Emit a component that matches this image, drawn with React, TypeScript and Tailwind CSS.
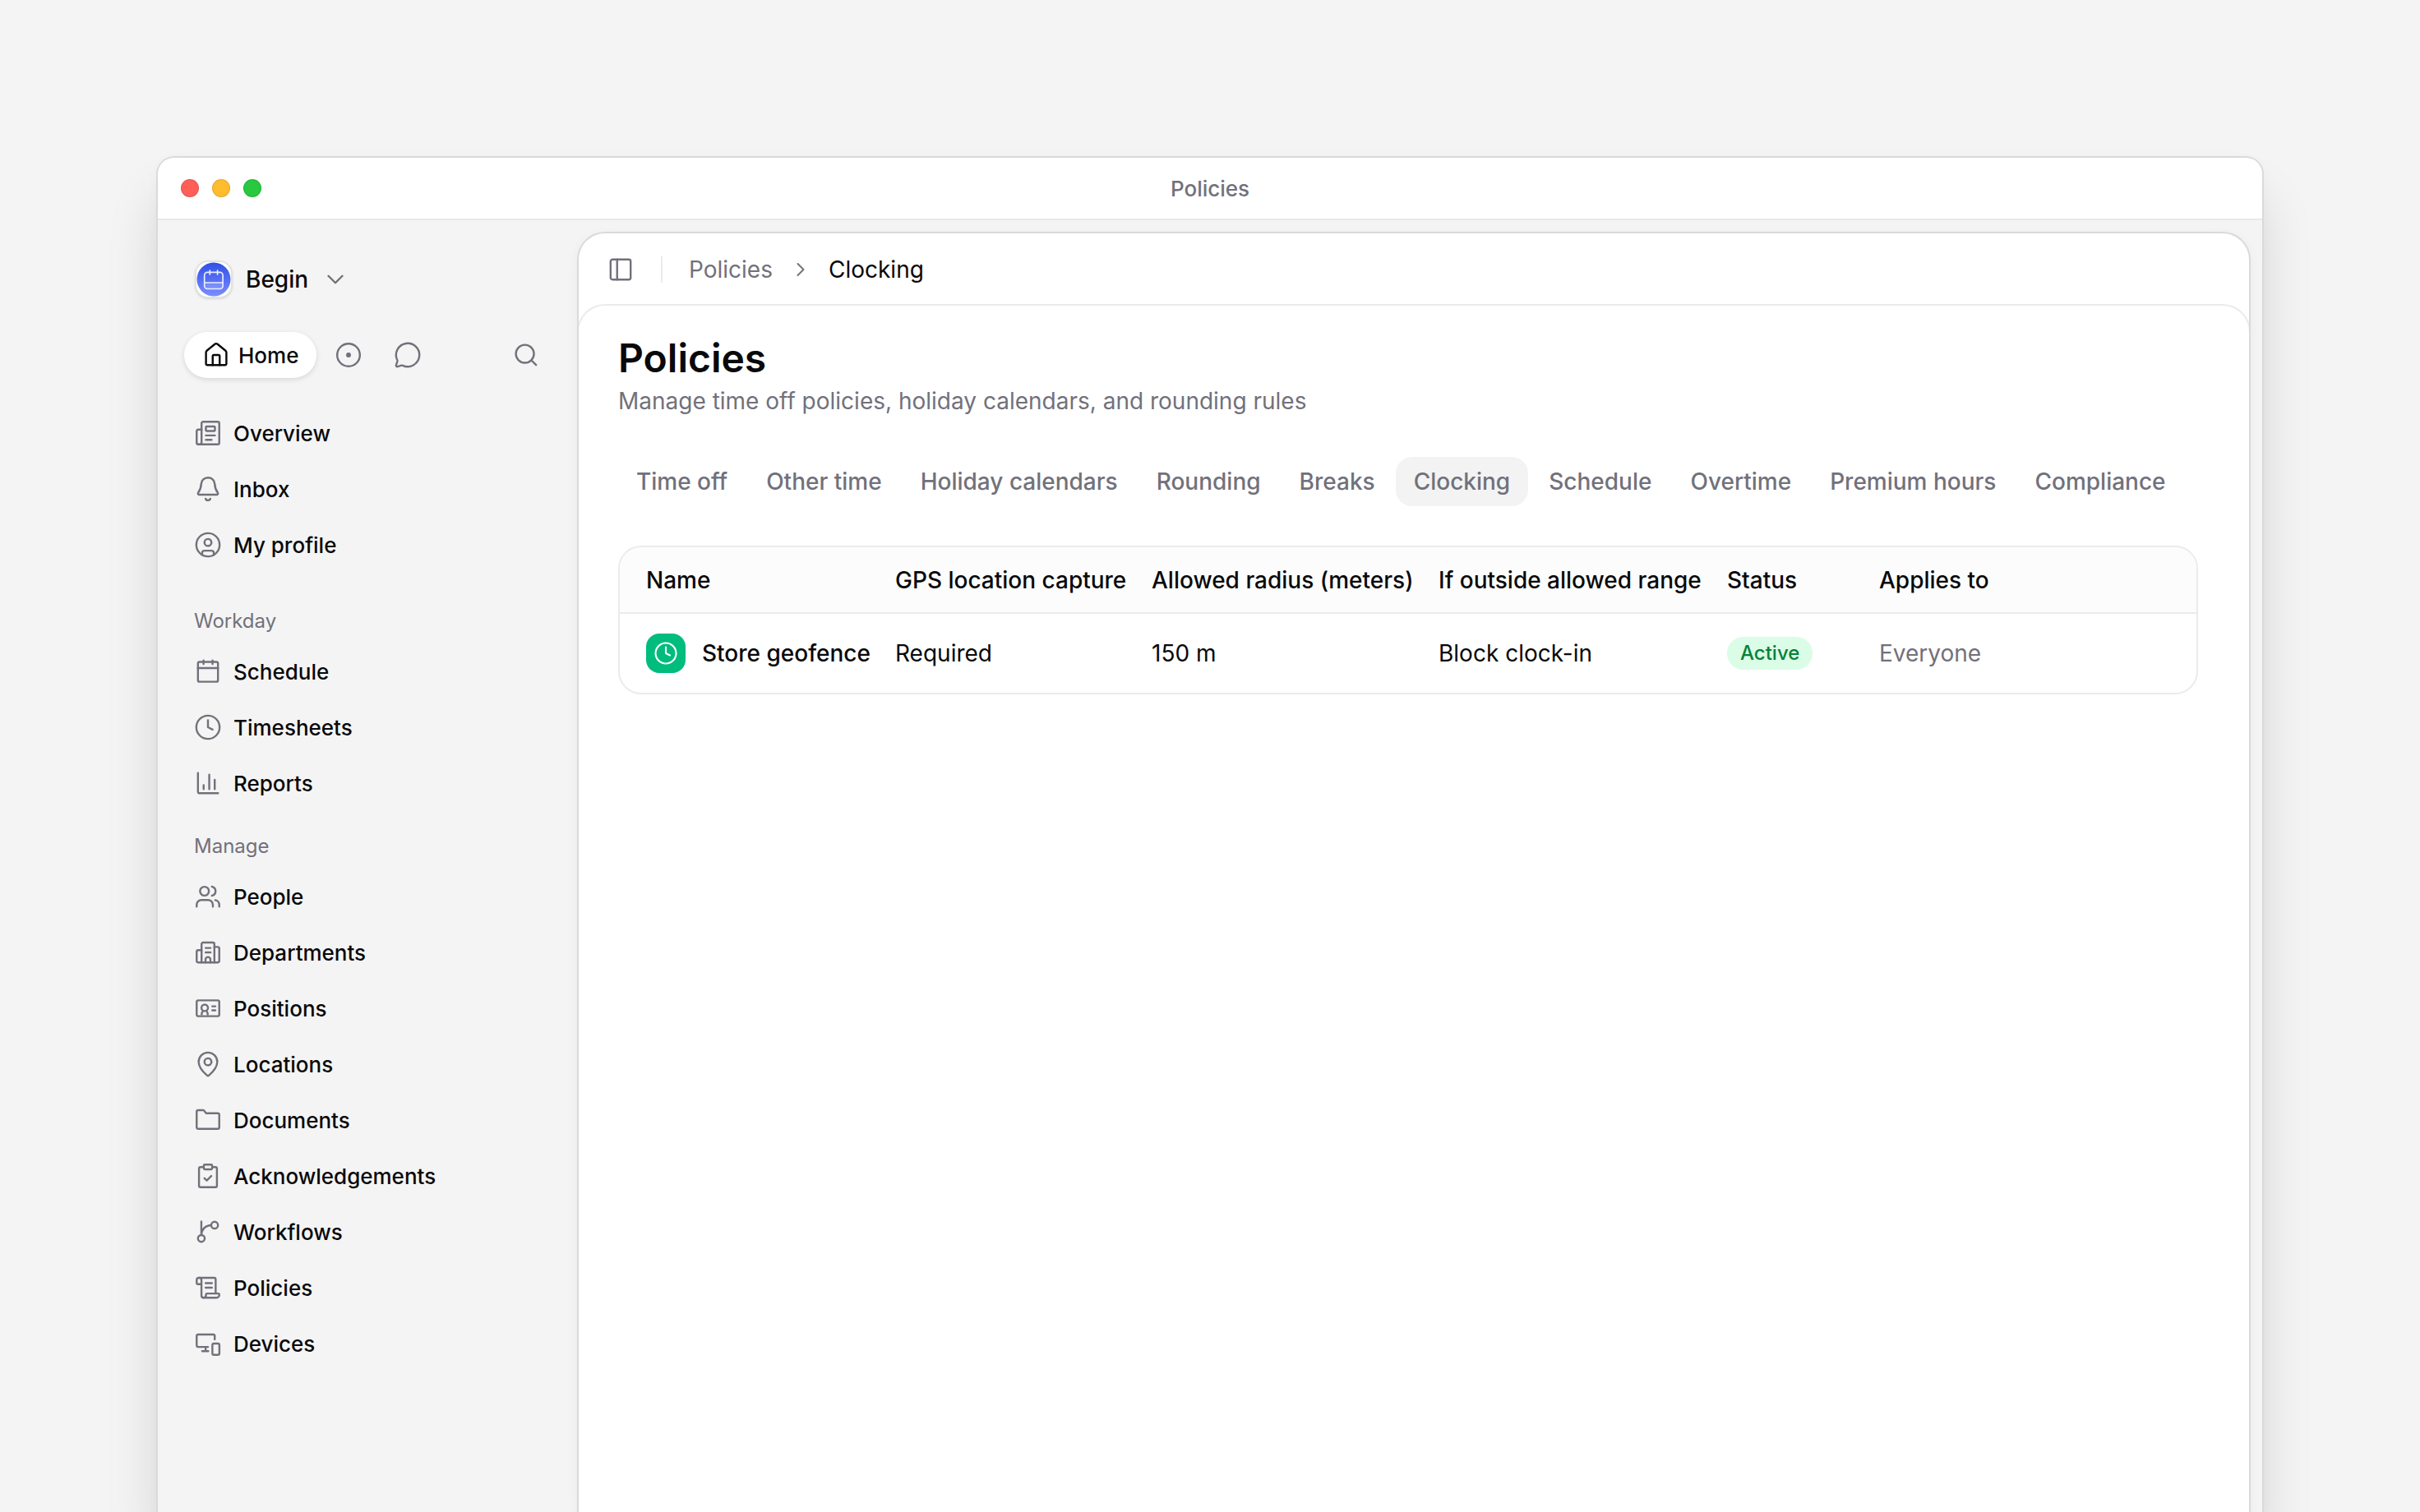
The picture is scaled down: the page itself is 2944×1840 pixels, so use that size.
import { ReactNode } from "react";
import {
  ChevronDown,
  ChevronRight,
  CircleUser,
  Clock,
  MapPin,
  MessageCircle,
} from "lucide-react";

const Icon = ({ children }: { children: ReactNode }) => (
  <svg
    viewBox="0 0 24 24"
    fill="none"
    stroke="currentColor"
    strokeWidth={1.7}
    strokeLinecap="round"
    strokeLinejoin="round"
    aria-hidden="true"
    className="size-[34px] shrink-0"
  >
    {children}
  </svg>
);

const HomeIcon = () => (
  <Icon>
    <path d="M3.25 9.8a2 2 0 0 1 .72-1.54l6.9-5.6a1.8 1.8 0 0 1 2.26 0l6.9 5.6a2 2 0 0 1 .72 1.54v9.6a1.3 1.3 0 0 1-1.3 1.3H4.55a1.3 1.3 0 0 1-1.3-1.3z" />
    <path d="M9 20.7V13a1 1 0 0 1 1-1h4a1 1 0 0 1 1 1v7.7" />
  </Icon>
);

const TargetIcon = () => (
  <Icon>
    <circle cx="12" cy="12" r="9.75" />
    <circle cx="12" cy="12" r="2.1" fill="currentColor" stroke="none" />
  </Icon>
);

const SearchIcon = () => (
  <Icon>
    <circle cx="11" cy="11" r="7.75" />
    <path d="M16.6 16.6l4 4" />
  </Icon>
);

const PanelIcon = () => (
  <Icon>
    <rect x="3.4" y="3.4" width="17.2" height="17.2" rx="1.6" />
    <path d="M9 3.4v17.2" />
  </Icon>
);

const OverviewIcon = () => (
  <Icon>
    <path d="M6.5 9H3.6a1.3 1.3 0 0 0-1.3 1.3v10.1a1.3 1.3 0 0 0 1.3 1.3" />
    <path d="M3.6 21.7h16.8a1.3 1.3 0 0 0 1.3-1.3V3.6a1.3 1.3 0 0 0-1.3-1.3H7.8a1.3 1.3 0 0 0-1.3 1.3v16.2c0 1.1-.6 1.9-1.6 1.9" />
    <rect x="10.2" y="6.4" width="7.8" height="3.8" rx=".6" />
    <path d="M10.2 14H18M10.2 17.8h4.9" />
  </Icon>
);

const BellIcon = () => (
  <Icon>
    <path d="M12 2.25c-3.2 0-5.6 2.3-5.8 5.4-.2 3.4-.8 5.2-2.5 7.4-.6.9-.1 1.9.9 1.9h14.8c1 0 1.5-1 .9-1.9-1.7-2.2-2.3-4-2.5-7.4-.2-3.1-2.6-5.4-5.8-5.4z" />
    <path d="M10 20.4c.2.8 1 1.4 2 1.4s1.8-.6 2-1.4" />
  </Icon>
);

const CalendarIcon = () => (
  <Icon>
    <rect x="3.4" y="3.9" width="17.2" height="17" rx="1.4" />
    <path d="M3.4 9.2h17.2M8.2 2.6v3M15.9 2.6v3" />
  </Icon>
);

const ReportsIcon = () => (
  <Icon>
    <path d="M3.4 3.3v16.1a1.3 1.3 0 0 0 1.3 1.3h16" />
    <path d="M8.3 13.8v3.4M13.1 4.8v12.4M17.8 9.2v8" />
  </Icon>
);

const PeopleIcon = () => (
  <Icon>
    <circle cx="9" cy="7.4" r="3.8" />
    <path d="M2.3 20.7v-1.6A4.1 4.1 0 0 1 6.4 15h5.7a4.1 4.1 0 0 1 4.1 4.1v1.6" />
    <path d="M15.4 3.5a4 4 0 0 1 0 7.8M18.2 15.1a4.1 4.1 0 0 1 3.5 4v1.6" />
  </Icon>
);

const DepartmentsIcon = () => (
  <Icon>
    <path d="M6.5 20.6V4.8a1.3 1.3 0 0 1 1.3-1.3h8.4a1.3 1.3 0 0 1 1.3 1.3v15.8" />
    <path d="M6.5 10.1H3.6a1.3 1.3 0 0 0-1.3 1.3v7.9a1.3 1.3 0 0 0 1.3 1.3h16.8a1.3 1.3 0 0 0 1.3-1.3V8.6a1.3 1.3 0 0 0-1.3-1.3h-2.9" />
    <path d="M10 8.2h4.2M10 12h4.2M9.9 20.6v-2.5a2.1 2.1 0 0 1 4.2 0v2.5" />
  </Icon>
);

const PositionsIcon = () => (
  <Icon>
    <rect x="2.3" y="5.2" width="19.4" height="13.6" rx="1.3" />
    <circle cx="9.2" cy="11.6" r="2.8" />
    <path d="M6.6 17.3c0-1.3.4-2.2 1.1-3M11.8 17.3c0-1.3-.4-2.2-1.1-3M15.7 10.3h2.6M15.7 13.8h2.6" />
  </Icon>
);

const FolderIcon = () => (
  <Icon>
    <path d="M2.3 4.8a1.3 1.3 0 0 1 1.3-1.3h4.2c.5 0 .9.2 1.1.6l1 1.5c.2.4.6.6 1.1.6h9.4a1.3 1.3 0 0 1 1.3 1.3v10.8a1.3 1.3 0 0 1-1.3 1.3H3.6a1.3 1.3 0 0 1-1.3-1.3z" />
  </Icon>
);

const ClipboardIcon = () => (
  <Icon>
    <path d="M8.4 4.4H5.6a1.3 1.3 0 0 0-1.3 1.3v14.7a1.3 1.3 0 0 0 1.3 1.3h12.8a1.3 1.3 0 0 0 1.3-1.3V5.7a1.3 1.3 0 0 0-1.3-1.3h-2.8" />
    <rect x="8.4" y="2.3" width="7.2" height="4" rx=".9" />
    <path d="M9 14l2 1.9 3.8-3.8" />
  </Icon>
);

const WorkflowIcon = () => (
  <Icon>
    <circle cx="6.3" cy="17.7" r="2.9" />
    <circle cx="17.7" cy="6.3" r="2.9" />
    <path d="M6.3 3.1v11.7c.3-4.9 3.5-8.3 8.5-8.5" />
  </Icon>
);

const ScrollIcon = () => (
  <Icon>
    <path d="M6.4 9H3.1a.8.8 0 0 1-.8-.8V5.5a2 2 0 0 1 4.1 0v13.2a1.9 1.9 0 0 0 1.9 1.9" />
    <path d="M4.3 3.5h13a1.3 1.3 0 0 1 1.3 1.3V17" />
    <path d="M8.3 20.6h11.2a2.2 2.2 0 0 0 2.2-2.2v-.6a.8.8 0 0 0-.8-.8h-9.8a.8.8 0 0 0-.8.8v.8a2 2 0 0 1-2 2" />
    <path d="M10 8.1h5.4M10 12h5.4" />
  </Icon>
);

const DevicesIcon = () => (
  <Icon>
    <path d="M12 14.9H3.6a1.3 1.3 0 0 1-1.3-1.3V5.5a1.3 1.3 0 0 1 1.3-1.3h12.9a1.3 1.3 0 0 1 1.3 1.3v2.9" />
    <path d="M10 14.9v3.6M7 18.5h5.3" />
    <rect x="15.8" y="12" width="6" height="9.7" rx="1.3" />
  </Icon>
);

const ProfileIcon = () => (
  <CircleUser className="size-[34px] shrink-0" strokeWidth={1.7} />
);
const TimesheetIcon = () => (
  <Clock className="size-[34px] shrink-0" strokeWidth={1.7} />
);
const LocationIcon = () => (
  <MapPin className="size-[34px] shrink-0" strokeWidth={1.7} />
);

type NavItem = { label: string; icon: () => ReactNode };

const mainNav: NavItem[] = [
  { label: "Overview", icon: OverviewIcon },
  { label: "Inbox", icon: BellIcon },
  { label: "My profile", icon: ProfileIcon },
];

const workdayNav: NavItem[] = [
  { label: "Schedule", icon: CalendarIcon },
  { label: "Timesheets", icon: TimesheetIcon },
  { label: "Reports", icon: ReportsIcon },
];

const manageNav: NavItem[] = [
  { label: "People", icon: PeopleIcon },
  { label: "Departments", icon: DepartmentsIcon },
  { label: "Positions", icon: PositionsIcon },
  { label: "Locations", icon: LocationIcon },
  { label: "Documents", icon: FolderIcon },
  { label: "Acknowledgements", icon: ClipboardIcon },
  { label: "Workflows", icon: WorkflowIcon },
  { label: "Policies", icon: ScrollIcon },
  { label: "Devices", icon: DevicesIcon },
];

const tabs = [
  "Time off",
  "Other time",
  "Holiday calendars",
  "Rounding",
  "Breaks",
  "Clocking",
  "Schedule",
  "Overtime",
  "Premium hours",
  "Compliance",
];

const NavList = ({ items }: { items: NavItem[] }) => (
  <ul>
    {items.map(({ label, icon: ItemIcon }) => (
      <li key={label}>
        <a
          href="#"
          className="flex h-[68px] items-center gap-3.5 text-[26px] font-medium"
        >
          <span className="text-zinc-500">
            <ItemIcon />
          </span>
          {label}
        </a>
      </li>
    ))}
  </ul>
);

const NavLabel = ({ children }: { children: ReactNode }) => (
  <h2 className="flex h-[54px] items-center text-2xl text-zinc-500">
    {children}
  </h2>
);

const BrandMark = () => (
  <span className="grid size-[46px] place-content-center rounded-2xl border-2 border-[#e2e2e2] bg-white shadow-sm">
    <svg viewBox="0 0 42 42" className="size-[42px]" aria-hidden="true">
      <defs>
        <linearGradient id="brand" x1="0" y1="0" x2="0" y2="1">
          <stop offset="0" stopColor="#2f50e6" />
          <stop offset="1" stopColor="#7b8dff" />
        </linearGradient>
      </defs>
      <circle cx="21" cy="21" r="20.5" fill="url(#brand)" />
      <path d="M10 25h22v4a3.5 3.5 0 0 1-3.5 3.5h-15A3.5 3.5 0 0 1 10 29z" fill="#fff" fillOpacity=".15" />
      <g fill="none" stroke="#e9edff" strokeWidth="1.7" strokeLinecap="round">
        <rect x="9.7" y="12.3" width="22.4" height="20.2" rx="3.6" />
        <path d="M9.7 25h22.4M16.3 10v5M25.6 10v5" />
      </g>
    </svg>
  </span>
);

const Sidebar = () => (
  <aside className="w-[512px] shrink-0 pt-12">
    <button className="flex h-12 items-center gap-4 px-[45px] text-[28px] font-medium">
      <BrandMark />
      Begin
      <ChevronDown className="size-[34px] text-zinc-500" strokeWidth={1.7} />
    </button>

    <div className="mt-10 flex items-center gap-1.5 px-8 text-zinc-500">
      <button className="flex h-14 items-center gap-2.5 rounded-full bg-white px-[22px] text-[26px] font-medium text-zinc-950 shadow-[0_2px_6px_rgba(0,0,0,0.12)]">
        <HomeIcon />
        Home
      </button>
      <button aria-label="Focus" className="grid h-14 w-[66px] place-content-center">
        <TargetIcon />
      </button>
      <button aria-label="Messages" className="grid h-14 w-[66px] place-content-center">
        <MessageCircle className="size-[34px]" strokeWidth={1.7} />
      </button>
      <button aria-label="Search" className="ml-auto grid h-14 w-16 place-content-center">
        <SearchIcon />
      </button>
    </div>

    <nav className="mt-[33px] px-11">
      <NavList items={mainNav} />
      <div className="mt-8">
        <NavLabel>Workday</NavLabel>
        <NavList items={workdayNav} />
      </div>
      <div className="mt-4">
        <NavLabel>Manage</NavLabel>
        <NavList items={manageNav} />
      </div>
    </nav>
  </aside>
);

const PolicyTable = () => (
  <div className="mt-12 overflow-hidden rounded-[28px] border-2 border-[#ebebeb]">
    <table className="w-full table-fixed border-separate border-spacing-0 text-left text-[28px] whitespace-nowrap">
      <colgroup>
        <col className="w-[319px]" />
        <col className="w-[312px]" />
        <col className="w-[349px]" />
        <col className="w-[351px]" />
        <col className="w-[185px]" />
        <col />
      </colgroup>
      <thead>
        <tr className="h-[81px] bg-[#fcfcfc] *:border-b-2 *:border-[#ebebeb] *:pl-4 *:font-medium *:first:pl-8">
          <th>Name</th>
          <th>GPS location capture</th>
          <th>Allowed radius (meters)</th>
          <th>If outside allowed range</th>
          <th>Status</th>
          <th>Applies to</th>
        </tr>
      </thead>
      <tbody>
        <tr className="h-24 *:pl-4 *:first:pl-8">
          <td>
            <div className="flex items-center gap-5 font-medium">
              <span className="grid size-12 shrink-0 place-content-center rounded-2xl bg-emerald-500 text-white">
                <Clock className="size-[30px]" strokeWidth={1.7} />
              </span>
              Store geofence
            </div>
          </td>
          <td>Required</td>
          <td>150 m</td>
          <td>Block clock-in</td>
          <td>
            <span className="flex h-10 w-fit items-center rounded-full bg-green-100 px-4 text-2xl font-medium text-green-700">
              Active
            </span>
          </td>
          <td className="text-zinc-500">Everyone</td>
        </tr>
      </tbody>
    </table>
  </div>
);

export default function App() {
  return (
    <div className="h-screen overflow-hidden bg-[#f4f4f4] px-48 pt-48 font-[Inter,sans-serif] text-zinc-950">
      <div className="flex h-full flex-col rounded-t-[20px] bg-[#f4f4f4] shadow-[0_0_0_2px_#dadada,0_48px_64px_rgba(0,0,0,0.13),0_4px_16px_rgba(0,0,0,0.03)]">
        <header className="grid h-[76px] shrink-0 grid-cols-[1fr_auto_1fr] items-center rounded-t-[20px] border-b-2 border-[#e8e8e8] bg-white px-7">
          <div className="flex gap-4">
            <span className="size-[22px] rounded-full border border-black/10 bg-[#ff5f57]" />
            <span className="size-[22px] rounded-full border border-black/10 bg-[#febc2e]" />
            <span className="size-[22px] rounded-full border border-black/10 bg-[#28c840]" />
          </div>
          <span className="text-[26px] font-medium text-zinc-500">Policies</span>
        </header>

        <div className="flex min-h-0 flex-1">
          <Sidebar />
          <main className="mt-4 mr-4 flex min-w-0 flex-1 flex-col overflow-hidden rounded-t-[32px] bg-white shadow-[0_0_0_2px_#dadada,0_4px_16px_rgba(0,0,0,0.06)]">
            <div className="flex h-[88px] shrink-0 items-center gap-8 pl-[34px] text-[28px] text-zinc-500">
              <button aria-label="Toggle sidebar">
                <PanelIcon />
              </button>
              <span className="h-8 w-0.5 bg-[#ebebeb]" />
              <nav aria-label="Breadcrumb" className="flex items-center gap-5">
                <a href="#">Policies</a>
                <ChevronRight className="size-7" strokeWidth={1.7} />
                <span className="text-zinc-950">Clocking</span>
              </nav>
            </div>

            <section className="flex-1 rounded-t-[32px] pt-8 pr-[62px] pl-12 shadow-[0_0_0_2px_#ebebeb]">
              <h1 className="text-5xl leading-[64px] font-semibold">Policies</h1>
              <p className="text-[28px] leading-10 text-zinc-500">
                Manage time off policies, holiday calendars, and rounding rules
              </p>

              <div role="tablist" className="mt-12 flex gap-[3px] whitespace-nowrap">
                {tabs.map((tab) => (
                  <button
                    key={tab}
                    role="tab"
                    aria-selected={tab === "Clocking"}
                    className="h-[60px] rounded-[20px] px-[22px] text-[28px] font-medium text-zinc-500 aria-selected:bg-[#f3f3f3]"
                  >
                    {tab}
                  </button>
                ))}
              </div>

              <PolicyTable />
            </section>
          </main>
        </div>
      </div>
    </div>
  );
}
